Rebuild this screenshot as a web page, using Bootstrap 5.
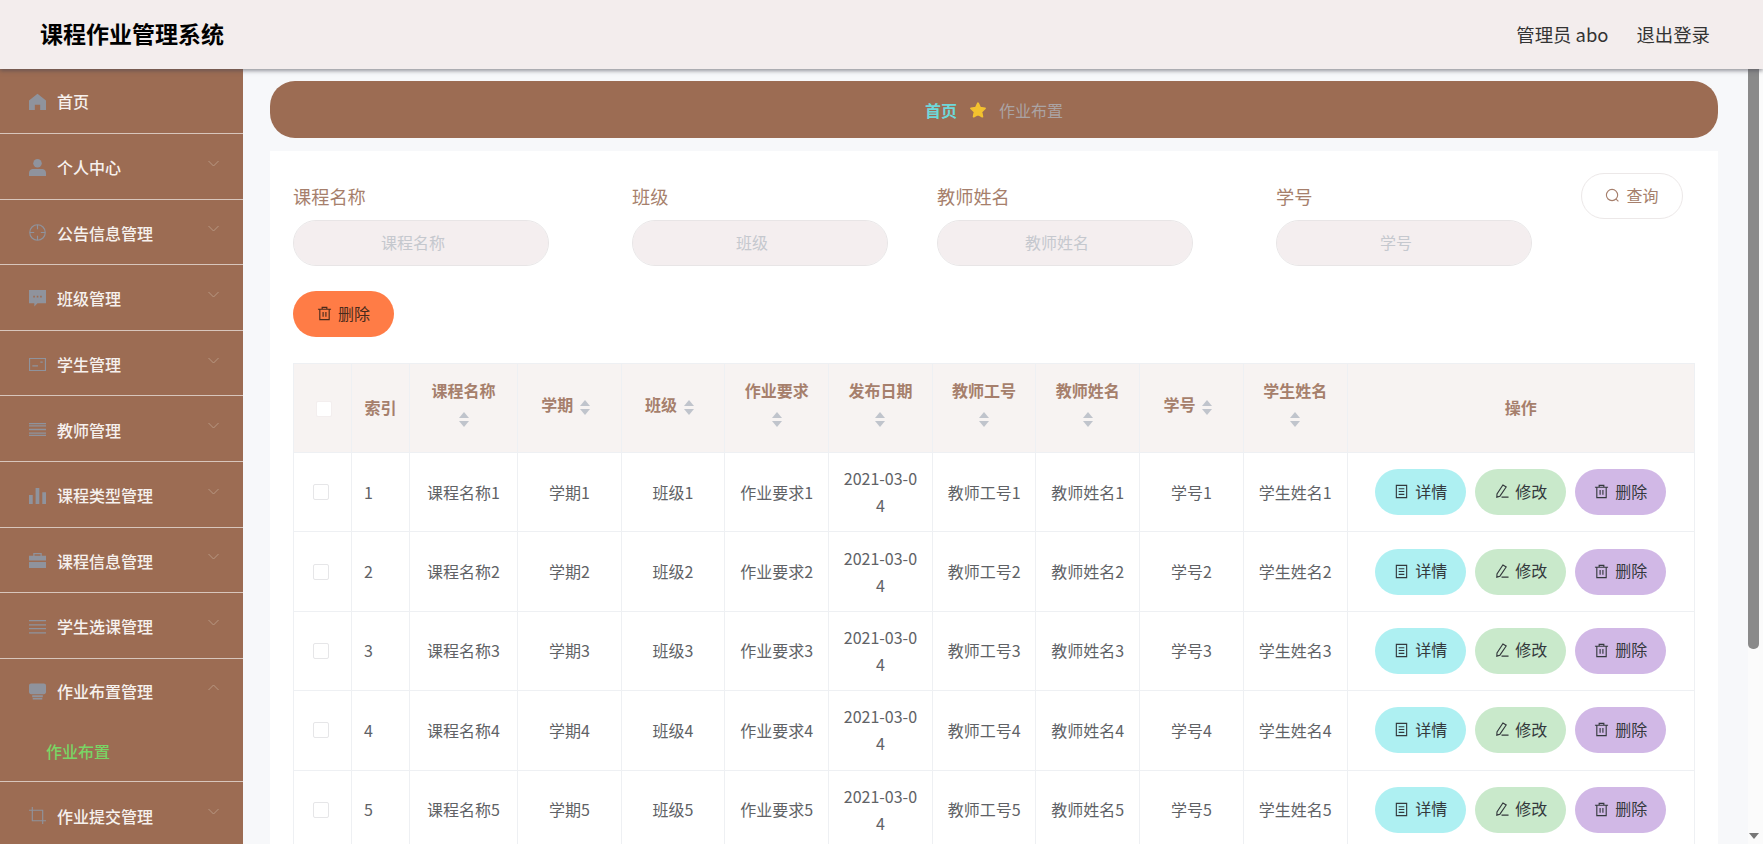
<!DOCTYPE html>
<html lang="zh-CN">
<head>
  <meta charset="UTF-8">
  <title>课程作业管理系统</title>
  <link href="https://cdn.jsdelivr.net/npm/bootstrap@5.3.0/dist/css/bootstrap.min.css" rel="stylesheet">
  <style>
    html, body {
      height: 100%;
      overflow: hidden;
    }
    body {
      font-family: "Noto Sans CJK SC", "Noto Sans", sans-serif;
      font-size: 16px;
      background-color: #f7f8fa;
    }
    .app-top {
      height: 69px;
      padding: 0 53px 2px 40px;
      background-color: #f3eded;
      box-shadow: 0 2px 4px rgba(70, 70, 80, .55);
      z-index: 10;
      position: relative;
    }
    .app-title {
      font-size: 23px;
      font-weight: 700;
      color: #000;
    }
    .app-user {
      font-size: 18.4px;
      color: #333;
      line-height: 26px;
      gap: 28px;
    }
    .app-body {
      height: 775px;
    }
    .side-menu {
      width: 243px;
      flex: none;
      background-color: #9c6c53;
      overflow: hidden;
    }
    .side-item {
      flex: none;
      height: 65.6px;
      padding: 0 24px 0 29px;
      border-bottom: 1px solid #d8c6bc;
      color: #f6f1ee;
      font-weight: 500;
      gap: 11px;
    }
    .side-item-first {
      height: 65px;
      padding-bottom: 2px;
    }
    .side-item-open {
      border-bottom: 0;
      padding-bottom: 3px;
    }
    .side-label {
      flex: 1;
      position: relative;
      top: 1px;
    }
    .side-ico {
      width: 17px;
      height: 17px;
      fill: #8f939d;
      flex: none;
      position: relative;
      top: 1px;
    }
    .side-ico-line {
      fill: none;
      stroke: #8f939d;
      stroke-width: 1.2;
    }
    .side-arrow {
      width: 11px;
      height: 7px;
      fill: none;
      stroke: #b79783;
      stroke-width: 1;
      position: relative;
      top: -3px;
    }
    .side-sub {
      flex: none;
      height: 58px;
      padding: 0 0 3px 46px;
      border-bottom: 1px solid #d8c6bc;
      color: #79d565;
      font-weight: 500;
    }
    .main-pane {
      flex: 1;
      min-width: 0;
      overflow: hidden;
      padding: 12px 30px 0 27px;
    }
    .scroll-rail {
      width: 15px;
      flex: none;
      background-color: #fbfbfb;
    }
    .scroll-thumb {
      width: 11px;
      height: 580px;
      flex: none;
      background-color: #8a8a8a;
      border-radius: 0 0 5px 5px;
    }
    .scroll-arrow {
      width: 0;
      height: 0;
      margin: 0 0 5px 1px;
      border-left: 5px solid transparent;
      border-right: 5px solid transparent;
      border-top: 6px solid #777;
    }
    .crumb-bar {
      height: 57px;
      border-radius: 25px;
      background-color: #9c6c53;
      gap: 12px;
    }
    .crumb-home {
      color: #6ed8da;
      font-weight: 700;
    }
    .crumb-now {
      color: #aba3a3;
    }
    .crumb-star {
      width: 18px;
      height: 18px;
      fill: #f3c22f;
      stroke: #f3c22f;
      stroke-width: 2.5;
      stroke-linejoin: round;
    }
    .list-panel {
      margin-top: 13px;
      padding: 22px 25px 71px 23px;
      background-color: #fff;
    }
    .query-item {
      width: 256px;
      margin-top: 10px;
    }
    .query-far {
      margin-left: 83px;
    }
    .query-near {
      margin-left: 49px;
    }
    .query-label {
      display: block;
      height: 26px;
      line-height: 26px;
      margin-bottom: 11px;
      font-size: 18.2px;
      color: #a67f6c;
    }
    .query-input {
      height: 46px;
      padding: 0 30px 3px 14px;
      background-color: #f4eeef;
      border: 1px solid #e8e5e6;
      text-align: center;
      font-size: 16px;
    }
    .query-input::placeholder {
      color: #c5c8ce;
    }
    .pill-btn {
      height: 46px;
      width: 91px;
      padding: 0 0 3px;
      font-size: 16px;
      gap: 6px;
      border-radius: 23px;
      border: 0;
      color: #34393d;
    }
    .pill-ico {
      width: 15px;
      height: 15px;
      fill: none;
      stroke: currentColor;
      stroke-width: 1.2;
      position: relative;
      top: 1px;
    }
    .btn-search {
      width: 102px;
      margin-left: 49px;
      border: 1px solid #ece8e8;
      background-color: #fff;
      color: #a67f6c;
    }
    .btn-remove-all {
      width: 101px;
      margin-top: 25px;
      background-color: #ff7c46;
      color: #4a2a1c;
    }
    .btn-detail {
      background-color: #aef0f2;
    }
    .btn-edit {
      background-color: #c9e9cb;
    }
    .btn-remove {
      background-color: #d1b8e6;
    }
    .data-table {
      margin: 26px 0 0;
      width: 1401px;
      table-layout: fixed;
      --bs-table-border-color: #eef0f3;
      color: #606266;
    }
    .data-table th, .data-table td {
      padding: 0 12px;
      text-align: center;
      vertical-align: middle;
    }
    .data-table th {
      height: 89px;
      --bs-table-bg: #f7f3f2;
      color: #a67f6c;
      font-weight: 600;
      line-height: 24px;
      padding-bottom: 2px;
    }
    .data-table td {
      height: 79.4px;
      color: #606266;
      line-height: 27px;
    }
    .data-table .cell-left {
      text-align: left;
    }
    .data-table .cell-date {
      word-break: break-all;
    }
    .col-narrow {
      width: 58px;
    }
    .col-first {
      width: 108px;
    }
    .col-mid {
      width: 103.7px;
    }
    .col-ops {
      width: 347.4px;
    }
    .sort-wrap {
      display: inline-flex;
      flex-direction: column;
      align-items: center;
      justify-content: center;
      gap: 3px;
      width: 24px;
      height: 34px;
      vertical-align: middle;
    }
    .sort-up, .sort-down {
      width: 0;
      height: 0;
      border-left: 5px solid transparent;
      border-right: 5px solid transparent;
    }
    .sort-up {
      border-bottom: 6px solid #c0c4cc;
    }
    .sort-down {
      border-top: 6px solid #c0c4cc;
    }
    .tick-box {
      display: block;
      width: 16px;
      height: 16px;
      margin: 0 0 0 7px;
      border: 1px solid #e6e6e8;
      border-radius: 2px;
      background-color: #fff;
    }
    .tick-box-head {
      margin: 3px 0 0 10px;
      border-color: #f3eeee;
    }
    .ops-wrap {
      gap: 9px;
    }
  </style>
</head>
<body>
  <svg class="d-none">
    <symbol id="i-doc" viewBox="0 0 16 16"><path d="M2.500 1.500h11v13h-11z"/><path d="M5 5h6M5 8h6M5 11h6"/></symbol>
    <symbol id="i-pen" viewBox="0 0 16 16"><path d="M9.500 1l3.500 2.200-6.700 9.800-3.300 1 .2-3.400zM8 14h7.500"/></symbol>
    <symbol id="i-bin" viewBox="0 0 16 16"><path d="M1 3.500h14M5.500 3.500v-2h5v2M3 3.500v11h10v-11M6.500 6.500v5M9.500 6.500v5"/></symbol>
    <symbol id="i-find" viewBox="0 0 16 16"><circle cx="7.500" cy="7.500" r="6"/><path d="M11.800 11.800l2.500 2.500"/></symbol>
  </svg>

  <header class="app-top d-flex align-items-center justify-content-between">
    <div class="app-title">课程作业管理系统</div>
    <div class="app-user d-flex">
      <span>管理员 abo</span>
      <span>退出登录</span>
    </div>
  </header>

  <div class="app-body d-flex">
    <nav class="side-menu nav flex-column flex-nowrap">
      <div class="side-item side-item-first d-flex align-items-center">
        <svg class="side-ico" viewBox="0 0 16 16"><path d="M8 .8L16 7v9h-5.500v-5h-5v5H0V7z"/></svg>
        <span class="side-label">首页</span>
      </div>
      <div class="side-item d-flex align-items-center">
        <svg class="side-ico" viewBox="0 0 16 16"><circle cx="8" cy="4" r="4"/><path d="M0 16v-2.500C0 10.500 2 9.500 4 9.500h8c2 0 4 1 4 4V16z"/></svg>
        <span class="side-label">个人中心</span>
        <svg class="side-arrow" viewBox="0 0 11 7"><path d="M.5 1l5 5 5-5"/></svg>
      </div>
      <div class="side-item d-flex align-items-center">
        <svg class="side-ico side-ico-line" viewBox="0 0 18 18"><circle cx="9" cy="9" r="8.200"/><path d="M9 1v4.500M9 12.500V17M1 9h4.500M12.500 9H17"/></svg>
        <span class="side-label">公告信息管理</span>
        <svg class="side-arrow" viewBox="0 0 11 7"><path d="M.5 1l5 5 5-5"/></svg>
      </div>
      <div class="side-item d-flex align-items-center">
        <svg class="side-ico" viewBox="0 0 16 16"><path fill-rule="evenodd" d="M0 0h16v12.500H8l-3 3v-3H0zM4 5.500v1.500h1.500V5.500zM7.300 5.500v1.500h1.500V5.500zM10.500 5.500v1.500H12V5.500z"/></svg>
        <span class="side-label">班级管理</span>
        <svg class="side-arrow" viewBox="0 0 11 7"><path d="M.5 1l5 5 5-5"/></svg>
      </div>
      <div class="side-item d-flex align-items-center">
        <svg class="side-ico side-ico-line" viewBox="0 0 18 18"><path d="M.6 2.600h16.800v12.800H.6zM3.500 10.500h6M12 6.500h2.500"/></svg>
        <span class="side-label">学生管理</span>
        <svg class="side-arrow" viewBox="0 0 11 7"><path d="M.5 1l5 5 5-5"/></svg>
      </div>
      <div class="side-item d-flex align-items-center">
        <svg class="side-ico side-ico-line" viewBox="0 0 16 16"><path d="M0 2.500h16M0 4.500h16M0 8h16M0 11.500h16M0 13.500h16"/></svg>
        <span class="side-label">教师管理</span>
        <svg class="side-arrow" viewBox="0 0 11 7"><path d="M.5 1l5 5 5-5"/></svg>
      </div>
      <div class="side-item d-flex align-items-center">
        <svg class="side-ico" viewBox="0 0 16 16"><path d="M0 7.500h3.500V16H0zM6.200 1h3.500v15H6.200zM12.500 5H16v11h-3.500z"/></svg>
        <span class="side-label">课程类型管理</span>
        <svg class="side-arrow" viewBox="0 0 11 7"><path d="M.5 1l5 5 5-5"/></svg>
      </div>
      <div class="side-item d-flex align-items-center">
        <svg class="side-ico" viewBox="0 0 16 16"><path d="M0 3.500h4V1h8v2.500h4V8H0zM5.200 3.500h5.600V2.200H5.200zM0 9.500h16V15H0z"/></svg>
        <span class="side-label">课程信息管理</span>
        <svg class="side-arrow" viewBox="0 0 11 7"><path d="M.5 1l5 5 5-5"/></svg>
      </div>
      <div class="side-item d-flex align-items-center">
        <svg class="side-ico side-ico-line" viewBox="0 0 16 16"><path d="M0 2.500h16M0 6.500h16M0 10h16M0 14h16"/></svg>
        <span class="side-label">学生选课管理</span>
        <svg class="side-arrow" viewBox="0 0 11 7"><path d="M.5 1l5 5 5-5"/></svg>
      </div>
      <div class="side-item side-item-open d-flex align-items-center">
        <svg class="side-ico" viewBox="0 0 16 16"><path d="M2 .5h12c1.200 0 2 .8 2 2v6c0 1.200-.8 2-2 2H2c-1.200 0-2-.8-2-2v-6C0 1.300.8.500 2 .5zM3 11.500h10v1.800h-10zM3.500 14h9v1.500h-9z"/></svg>
        <span class="side-label">作业布置管理</span>
        <svg class="side-arrow" viewBox="0 0 11 7"><path d="M.5 6l5-5 5 5"/></svg>
      </div>
      <div class="side-sub d-flex align-items-center">作业布置</div>
      <div class="side-item d-flex align-items-center">
        <svg class="side-ico side-ico-line" viewBox="0 0 18 18"><path d="M3.500 0v14.500H18M0 3.500h14.500V18"/></svg>
        <span class="side-label">作业提交管理</span>
        <svg class="side-arrow" viewBox="0 0 11 7"><path d="M.5 1l5 5 5-5"/></svg>
      </div>
    </nav>

    <main class="main-pane">
      <div class="crumb-bar d-flex align-items-center justify-content-center">
        <span class="crumb-home">首页</span>
        <svg class="crumb-star" viewBox="0 0 24 24"><path d="M12 3l2.800 6 6.500.8-4.800 4.500 1.300 6.500-5.800-3.300-5.800 3.300 1.300-6.500-4.800-4.500 6.500-.8z"/></svg>
        <span class="crumb-now">作业布置</span>
      </div>

      <section class="list-panel">
        <form class="d-flex align-items-start">
          <div class="query-item">
            <label class="query-label">课程名称</label>
            <input class="form-control rounded-pill query-input" placeholder="课程名称">
          </div>
          <div class="query-item query-far">
            <label class="query-label">班级</label>
            <input class="form-control rounded-pill query-input" placeholder="班级">
          </div>
          <div class="query-item query-near">
            <label class="query-label">教师姓名</label>
            <input class="form-control rounded-pill query-input" placeholder="教师姓名">
          </div>
          <div class="query-item query-far">
            <label class="query-label">学号</label>
            <input class="form-control rounded-pill query-input" placeholder="学号">
          </div>
          <button type="button" class="btn pill-btn btn-search d-flex align-items-center justify-content-center">
            <svg class="pill-ico"><use href="#i-find"/></svg>查询
          </button>
        </form>

        <button type="button" class="btn pill-btn btn-remove-all d-flex align-items-center justify-content-center">
          <svg class="pill-ico"><use href="#i-bin"/></svg>删除
        </button>

        <table class="table table-bordered data-table">
          <colgroup>
            <col class="col-narrow"><col class="col-narrow"><col class="col-first">
            <col class="col-mid"><col class="col-mid"><col class="col-mid"><col class="col-mid"><col class="col-mid">
            <col class="col-mid"><col class="col-mid"><col class="col-mid"><col class="col-ops">
          </colgroup>
          <thead>
            <tr id="headRow"></tr>
          </thead>
          <tbody id="rows"></tbody>
        </table>
      </section>
    </main>

    <div class="scroll-rail d-flex flex-column justify-content-between">
      <div class="scroll-thumb"></div>
      <div class="scroll-arrow"></div>
    </div>
  </div>

  <script src="https://cdn.jsdelivr.net/npm/bootstrap@5.3.0/dist/js/bootstrap.bundle.min.js"></script>
  <script>
    const sortMark = '<span class="sort-wrap"><i class="sort-up"></i><i class="sort-down"></i></span>';
    const heads = ['课程名称', '学期', '班级', '作业要求', '发布日期', '教师工号', '教师姓名', '学号', '学生姓名'];

    let headHtml = '<th><span class="tick-box tick-box-head"></span></th><th>索引</th>';
    heads.forEach(h => { headHtml += `<th>${h}${sortMark}</th>`; });
    headHtml += '<th>操作</th>';
    document.getElementById('headRow').innerHTML = headHtml;

    let rowHtml = '';
    for (let i = 1; i <= 5; i++) {
      rowHtml += `<tr>
        <td><span class="tick-box"></span></td>
        <td class="cell-left">${i}</td>
        <td>课程名称${i}</td>
        <td>学期${i}</td>
        <td>班级${i}</td>
        <td>作业要求${i}</td>
        <td class="cell-date">2021-03-04</td>
        <td>教师工号${i}</td>
        <td>教师姓名${i}</td>
        <td>学号${i}</td>
        <td>学生姓名${i}</td>
        <td>
          <div class="ops-wrap d-flex justify-content-center">
            <button type="button" class="btn pill-btn btn-detail d-flex align-items-center justify-content-center"><svg class="pill-ico"><use href="#i-doc"/></svg>详情</button>
            <button type="button" class="btn pill-btn btn-edit d-flex align-items-center justify-content-center"><svg class="pill-ico"><use href="#i-pen"/></svg>修改</button>
            <button type="button" class="btn pill-btn btn-remove d-flex align-items-center justify-content-center"><svg class="pill-ico"><use href="#i-bin"/></svg>删除</button>
          </div>
        </td>
      </tr>`;
    }
    document.getElementById('rows').innerHTML = rowHtml;
  </script>
</body>
</html>
